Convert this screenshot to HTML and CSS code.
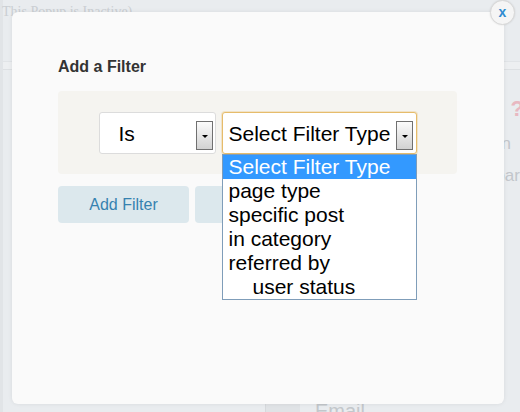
FILE: index.html
```html
<!DOCTYPE html>
<html>
<head>
<meta charset="utf-8">
<link rel="stylesheet" href="styles.css">
</head>
<body>
<div class="page">
  <div class="page-header">This Popup is Inactive)</div>
  <div class="page-band"></div>
  <div class="page-body">
    <div class="side">
      <span class="side-icon">?</span>
      <span class="side-text side-first">Pop-in</span>
      <span class="side-text">Sidebar</span>
    </div>
  </div>
  <div class="page-foot">
    <span class="foot-line"></span>
    <span class="foot-block"></span>
    <span class="foot-label">Email</span>
  </div>
</div>

<div class="modal">
  <button class="close">x</button>
  <h3 class="modal-title">Add a Filter</h3>
  <div class="filter-box">
    <div class="select select-is">
      <span class="select-text">Is</span>
      <span class="arrow"></span>
    </div>
    <div class="select select-type">
      <span class="select-text">Select Filter Type</span>
      <span class="arrow"></span>
      <ul class="dropdown">
        <li class="option selected">Select Filter Type</li>
        <li class="option">page type</li>
        <li class="option">specific post</li>
        <li class="option">in category</li>
        <li class="option">referred by</li>
        <li class="option indent">user status</li>
      </ul>
    </div>
  </div>
  <div class="actions">
    <button class="btn">Add Filter</button>
    <button class="btn">Cancel</button>
  </div>
</div>
</body>
</html>
```
FILE: styles.css
```css
* { box-sizing: border-box; }
html, body { margin: 0; padding: 0; }
body {
  width: 520px;
  height: 412px;
  overflow: hidden;
  position: relative;
  background: #e1e4e7;
  font-family: "Liberation Sans", Arial, sans-serif;
}

/* backdrop page */
.page {
  margin-left: 3px;
  height: 412px;
  background: #e9ecef;
  display: flex;
  flex-direction: column;
}
.page-header {
  height: 62px;
  padding-top: 4px;
  text-indent: -1px;
  font: 14px/16px "Liberation Serif", serif;
  color: #cbcfd3;
  border-bottom: 1px solid #e1e4e7;
}
.page-band {
  height: 8px;
  background: #edeff1;
  border-bottom: 1px solid #dde0e3;
}
.page-body {
  flex: 1;
  display: flex;
  justify-content: flex-end;
}
.side {
  width: 100px;
  padding-top: 26px;
  display: flex;
  flex-direction: column;
  align-items: flex-end;
  gap: 12px;
}
.side-icon {
  margin-right: -4px;
  color: #e8b8c1;
  font-size: 22px;
  font-weight: bold;
}
.side-text {
  color: #c2c6cb;
  font-size: 17px;
}
.side-first { margin-right: 9px; }
.page-foot {
  height: 14px;
  display: flex;
  align-items: flex-start;
  padding-left: 262px;
}
.foot-line {
  width: 1px;
  height: 14px;
  background: #d6d9dc;
}
.foot-block {
  width: 34px;
  height: 14px;
  background: #e0e3e6;
}
.foot-label {
  margin-left: 15px;
  margin-top: 2px;
  font-size: 20px;
  line-height: 22px;
  color: #c3c7cb;
}

/* modal */
.modal {
  position: absolute;
  left: 12px;
  top: 12px;
  width: 492px;
  height: 392px;
  background: #fafafa;
  border-radius: 6px;
  box-shadow: 0 0 4px rgba(0, 0, 0, 0.08);
  padding: 46px 46px 0 46px;
}
.close {
  position: absolute;
  top: -12px;
  right: -11px;
  width: 25px;
  height: 25px;
  padding: 0;
  border-radius: 50%;
  border: 1px solid #d8d8d8;
  background: #f5f5f5;
  box-shadow: 0 0 2px rgba(0, 0, 0, 0.12);
  color: #2f8bd0;
  font: bold 14px/21px "Liberation Sans", Arial, sans-serif;
  text-align: center;
}
.modal-title {
  margin: 0;
  font-size: 16px;
  line-height: 18px;
  font-weight: bold;
  color: #333;
}
.filter-box {
  margin-top: 15px;
  width: 399px;
  height: 83px;
  background: #f5f4f0;
  border-radius: 4px;
  padding-top: 21px;
  display: flex;
  justify-content: center;
  align-items: flex-start;
  gap: 6px;
}
.select {
  position: relative;
  height: 42px;
  display: flex;
  align-items: center;
  background: #fff;
  border: 1px solid #dcdcdc;
  border-radius: 3px;
  font-size: 21px;
  color: #000;
}
.select-is {
  width: 117px;
  padding-left: 19px;
}
.select-type {
  width: 195px;
  padding-left: 6px;
  border-color: #e6bc6b;
  box-shadow: 0 0 0 1px rgba(236, 196, 126, 0.35);
}
.select-text {
  white-space: nowrap;
  padding-top: 1px;
}
.arrow {
  position: relative;
  align-self: flex-start;
  margin-top: 8px;
  margin-left: auto;
  margin-right: 2px;
  width: 17px;
  height: 29px;
  border: 1px solid #707070;
  background: linear-gradient(#fbfbfb, #d2d2d2);
}
.select-type .arrow { margin-right: 3px; }
.arrow::after {
  content: "";
  position: absolute;
  left: 5px;
  top: 13px;
  border-left: 3px solid transparent;
  border-right: 3px solid transparent;
  border-top: 3px solid #000;
}
.dropdown {
  position: absolute;
  left: -1px;
  top: calc(100% + 1px);
  width: 195px;
  margin: 0;
  padding: 0;
  list-style: none;
  background: #fff;
  border: 1px solid #7f9db9;
}
.option {
  height: 24px;
  line-height: 24px;
  padding-left: 6px;
  font-size: 21px;
  color: #000;
  white-space: nowrap;
}
.option.selected {
  background: #3399ff;
  color: #fff;
}
.option.indent { padding-left: 30px; }
.actions {
  margin-top: 12px;
  display: flex;
  gap: 6px;
}
.btn {
  width: 131px;
  height: 37px;
  border: 0;
  border-radius: 4px;
  background: #dce8ed;
  color: #3682b0;
  font: 16px "Liberation Sans", Arial, sans-serif;
  padding: 0;
}
```
